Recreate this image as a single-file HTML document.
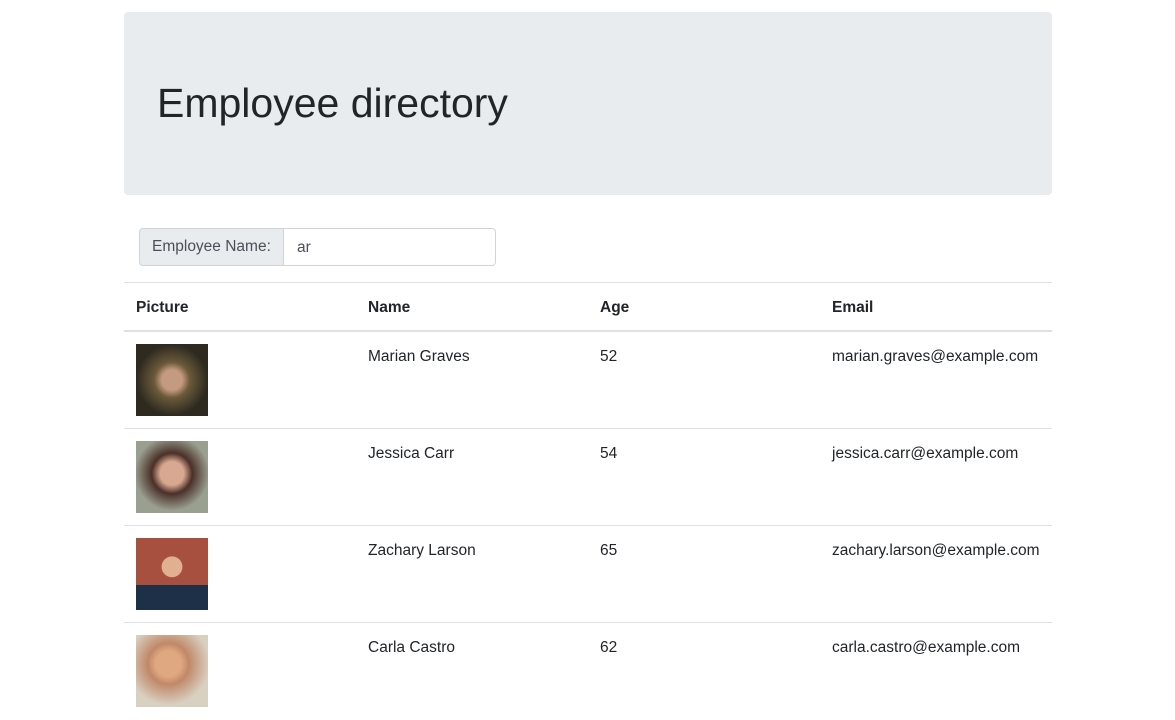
<!DOCTYPE html>
<html><head><meta charset="utf-8"><style>
*{box-sizing:border-box}
body{margin:0;font-family:"Segoe UI","Liberation Sans",sans-serif;color:#212529;font-size:15.5px;background:#fff}
.c{position:absolute;left:124px;width:928px;top:12px}
.jb{background:#e9ecef;border-radius:4px;height:183px;padding:0 33px;position:relative}
.jb h1{margin:0;position:absolute;top:67px;left:33px;font-size:41px;font-weight:500;line-height:1.2}
.ig{position:absolute;left:15px;top:216px;height:38px;display:flex}
.ig .l{background:#e9ecef;border:1px solid #ced4da;border-radius:4px 0 0 4px;padding:0 12px;line-height:36px;color:#495057;width:145px}
.ig .i{border:1px solid #ced4da;border-left:none;border-radius:0 4px 4px 0;width:212px;padding:0 13px;line-height:38px;color:#495057}
table{position:absolute;top:270px;left:0;width:928px;border-collapse:collapse;table-layout:fixed}
th,td{text-align:left;vertical-align:top;padding:12px;border-top:1px solid #dee2e6;width:232px}
th{font-weight:700;line-height:26px;padding-top:12px;padding-bottom:9px;border-bottom:2px solid #dee2e6}
td{height:97px;line-height:26px}
.p{width:72px;height:72px;display:block;margin-top:0}
</style></head><body>
<div class="c">
<div class="jb"><h1>Employee directory</h1></div>
<div class="ig"><div class="l">Employee Name:</div><div class="i">ar</div></div>
<table>
<tr><th>Picture</th><th>Name</th><th>Age</th><th>Email</th></tr>
<tr><td><div class="p" style="background:radial-gradient(circle at 50% 50%,#c49a80 0 20%,#6b5a3a 35%,#2e2a20 70%)"></div></td><td>Marian Graves</td><td>52</td><td>marian.graves@example.com</td></tr>
<tr><td><div class="p" style="background:radial-gradient(circle at 50% 45%,#d8a890 0 22%,#4a3028 38%,#9aa090 70%)"></div></td><td>Jessica Carr</td><td>54</td><td>jessica.carr@example.com</td></tr>
<tr><td><div class="p" style="background:radial-gradient(circle at 50% 40%,#e0b090 0 18%,transparent 19%),linear-gradient(#a85040 0 65%,#1e3048 65%)"></div></td><td>Zachary Larson</td><td>65</td><td>zachary.larson@example.com</td></tr>
<tr><td><div class="p" style="background:radial-gradient(circle at 45% 40%,#e0a880 0 22%,#c08868 35%,#d8d0c0 70%)"></div></td><td>Carla Castro</td><td>62</td><td>carla.castro@example.com</td></tr>
</table>
</div>
</body></html>
